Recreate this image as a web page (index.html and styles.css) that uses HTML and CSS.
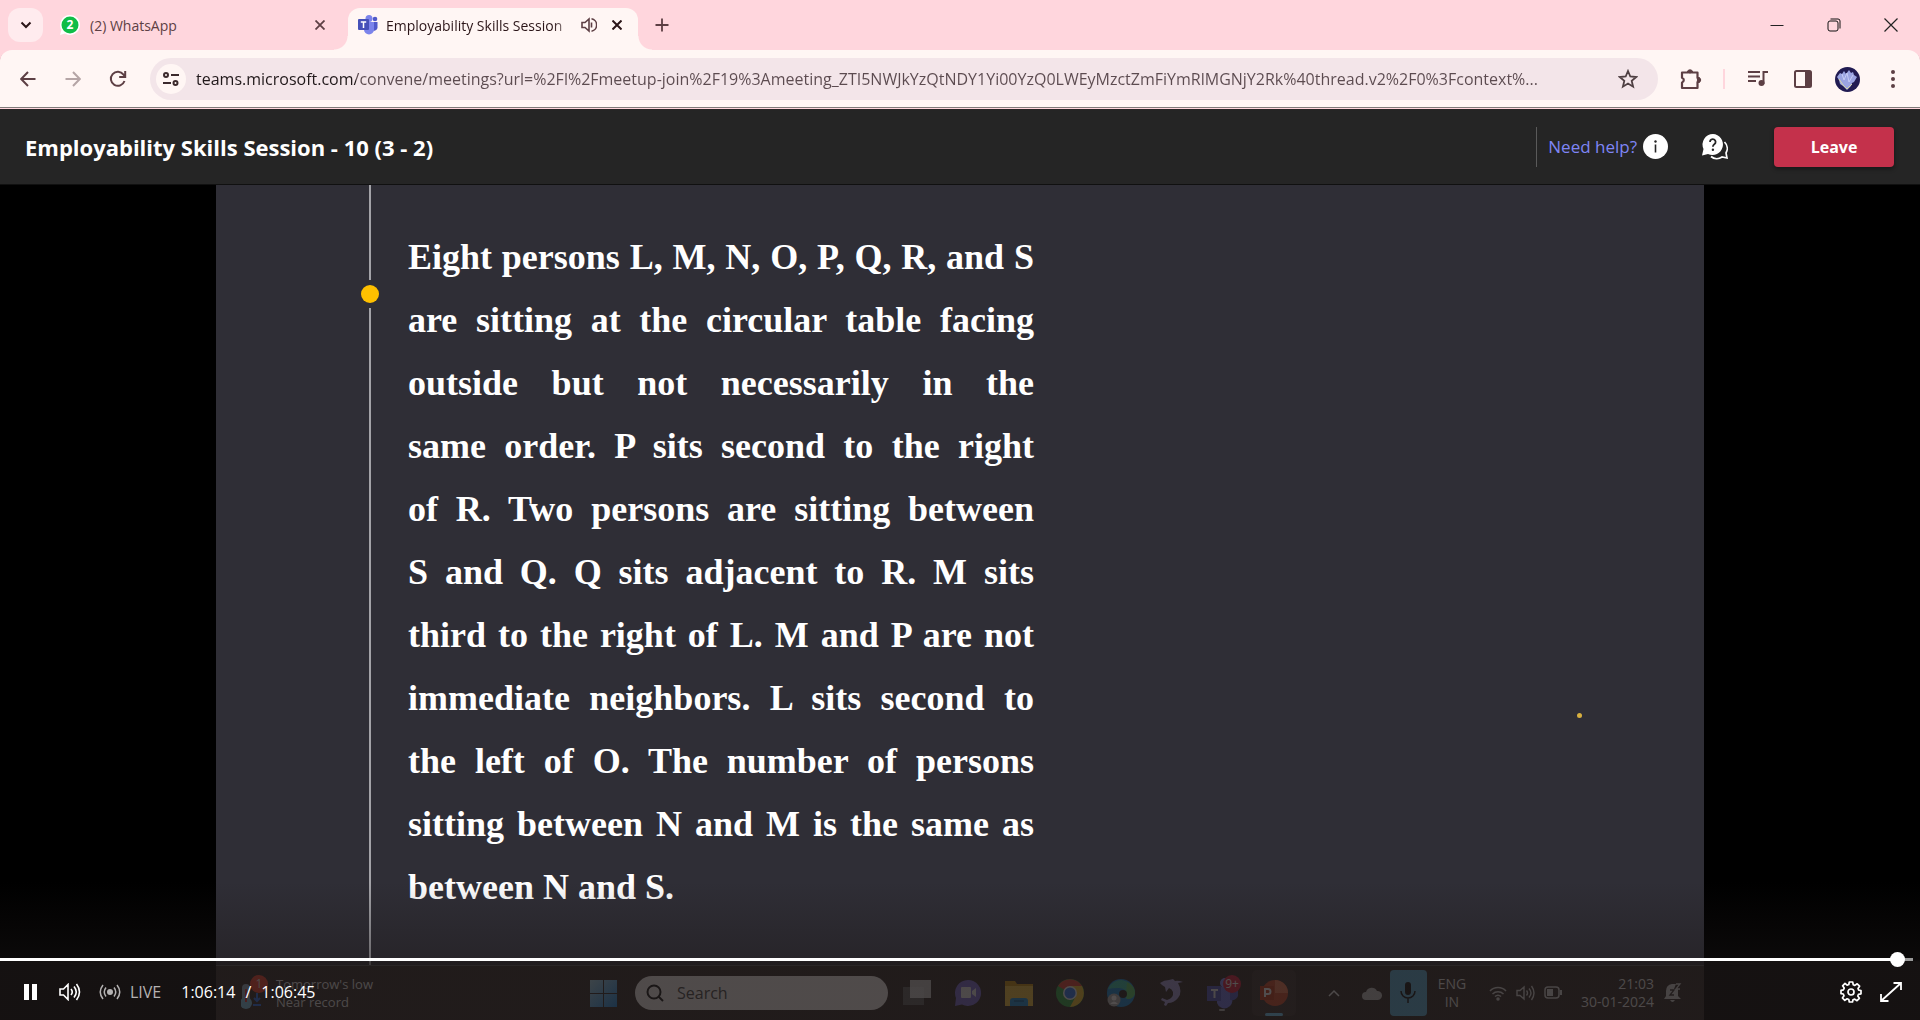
FILE: index.html
```html
<!DOCTYPE html>
<html lang="en">
<head>
<meta charset="utf-8">
<title>Employability Skills Session</title>
<link rel="stylesheet" href="styles.css">
</head>
<body>
<div class="browser">
  <div class="tabstrip">
    <button class="tab-search" aria-label="Search tabs"><svg width="12" height="12" viewBox="0 0 12 12"><path d="M1.500 3.500 6 8l4.500-4.500" fill="none" stroke="#2b1518" stroke-width="2"/></svg></button>
    <div class="tab">
      <svg width="20" height="20" viewBox="0 0 20 20"><path d="M10 0a10 10 0 1 1-5 18.600L0 20l1.400-5A10 10 0 0 1 10 0z" fill="#fff"/><circle cx="10" cy="10" r="8.500" fill="#0fbd47"/><text x="10" y="14" font-size="12" font-weight="700" text-anchor="middle" fill="#fff" font-family="Open Sans, sans-serif">2</text></svg>
      <span class="tab-title">(2) WhatsApp</span>
      <button class="tab-close" aria-label="Close WhatsApp"><svg width="10" height="10" viewBox="0 0 10 10"><path d="M.5.5l9 9M9.500.5l-9 9" stroke="#5d3f44" stroke-width="1.800"/></svg></button>
    </div>
    <div class="tab tab-active">
      <svg width="20" height="20" viewBox="0 0 20 20"><circle cx="11" cy="3.500" r="3.500" fill="#7b83eb"/><circle cx="17" cy="4" r="2.300" fill="#5059c9"/><path d="M14 7h5.500v6a3.500 3.500 0 0 1-5.500 2z" fill="#5059c9"/><path d="M6 7h10v7.500a5 5 0 0 1-10 0z" fill="#7b83eb"/><rect y="4" width="11" height="11" rx="1" fill="#4550b8"/><path d="M2.800 7h5.400M5.500 7v6" stroke="#fff" stroke-width="1.500"/></svg>
      <span class="tab-title tab-fade">Employability Skills Session</span>
      <button class="tab-close" aria-label="Mute tab"><svg width="16" height="16" viewBox="0 0 16 16" fill="none" stroke="#5d3f44" stroke-width="1.600"><path d="M1 5.500h3L8 2v12l-4-3.500H1z"/><path d="M10.500 5.500v5M10.500 1.800a6.300 6.300 0 0 1 0 12.400"/></svg></button>
      <button class="tab-close" aria-label="Close tab"><svg width="10" height="10" viewBox="0 0 10 10"><path d="M.5.5l9 9M9.500.5l-9 9" stroke="#2b1518" stroke-width="2"/></svg></button>
    </div>
    <button class="new-tab" aria-label="New tab"><svg width="14" height="14" viewBox="0 0 14 14"><path d="M7 .5v13M.5 7h13" stroke="#5d3f44" stroke-width="1.800"/></svg></button>
    <div class="window-buttons">
      <button aria-label="Minimize"><svg width="14" height="14" viewBox="0 0 14 14"><path d="M.5 7.500h13" stroke="#222"/></svg></button>
      <button aria-label="Restore"><svg width="14" height="14" viewBox="0 0 14 14" fill="none" stroke="#111"><rect x="1" y="3" width="10" height="10" rx="2"/><path d="M3.500 1H11a2 2 0 0 1 2 2v7.500"/></svg></button>
      <button aria-label="Close"><svg width="14" height="14" viewBox="0 0 14 14"><path d="M.5.5l13 13M13.500.5l-13 13" stroke="#222" stroke-width="1.200"/></svg></button>
    </div>
  </div>
  <div class="toolbar">
    <div class="nav">
      <button aria-label="Back"><svg width="16" height="16" viewBox="0 0 16 16" fill="none" stroke="#5d3f44" stroke-width="2"><path d="M15.500 8H1.500M8 1 1.200 8 8 15"/></svg></button>
      <button aria-label="Forward"><svg width="16" height="16" viewBox="0 0 16 16" fill="none" stroke="#b5a5a6" stroke-width="2"><path d="M.5 8h14M8 1l6.800 7L8 15"/></svg></button>
      <button aria-label="Reload"><svg width="18" height="18" viewBox="0 0 18 18" fill="none" stroke="#5d3f44" stroke-width="2"><path d="M15.500 11A7 7 0 1 1 14.500 4.600L16 6.500M16.200 1v6h-6"/></svg></button>
    </div>
    <div class="omnibox">
      <button class="site-info" aria-label="Site information"><svg width="16" height="14" viewBox="0 0 16 14" fill="none" stroke="#3c2a2d" stroke-width="2"><circle cx="3" cy="3" r="2"/><path d="M8 3h8M0 11h8"/><circle cx="12.500" cy="11" r="2"/></svg></button>
      <input class="url" aria-label="Address" value="teams.microsoft.com/convene/meetings?url=%2Fl%2Fmeetup-join%2F19%3Ameeting_ZTI5NWJkYzQtNDY1Yi00YzQ0LWEyMzctZmFiYmRlMGNjY2Rk%40thread.v2%2F0%3Fcontext%...">
      <button class="star" aria-label="Bookmark"><svg width="20" height="20" viewBox="0 0 20 20"><path d="M10 2l2.300 5.500 5.900.5-4.500 3.900 1.400 5.800-5.100-3.100-5.100 3.100 1.400-5.800L1.800 8l5.900-.5z" fill="none" stroke="#4f4043" stroke-width="1.800"/></svg></button>
    </div>
    <div class="tools">
      <button aria-label="Extensions"><svg width="22" height="22" viewBox="0 0 22 22"><path d="M2 4.500h6V3.500h4v1h5.500v5.500h1.500v4h-1.500V20H2v-5.500a2.500 2.500 0 0 0 0-4.800z" fill="none" stroke="#5d3f44" stroke-width="2.200" stroke-linejoin="round"/><circle cx="10" cy="3.500" r="2.200" fill="#5d3f44"/><circle cx="19" cy="12" r="2.200" fill="#5d3f44"/></svg></button>
      <span class="tools-rule"></span>
      <button aria-label="Media"><svg width="20" height="18" viewBox="0 0 20 18" fill="none" stroke="#5d3f44" stroke-width="2"><path d="M0 2h12M0 6.500h12M0 11h8M15.500 14V2H20"/><circle cx="13.500" cy="13" r="3" fill="#5d3f44" stroke="none"/></svg></button>
      <button aria-label="Side panel"><svg width="18" height="18" viewBox="0 0 18 18"><rect x="1" y="1" width="16" height="16" rx="1.500" fill="none" stroke="#5d3f44" stroke-width="2"/><path d="M11 1h6v16h-6z" fill="#5d3f44"/></svg></button>
      <button aria-label="Profile"><svg width="25" height="25" viewBox="0 0 25 25"><circle cx="12.500" cy="12.500" r="12.500" fill="#211b52"/><path d="M2 10l3-4 2 1 2-3 2 3 3-4 2 3 2-1 1 3 3 2-3 5-2 1-1 3-4 4-4-4-3-2-1-4z" fill="#9ba4e2"/><path d="M7 7l2 6 3-7 2 9 4-7" fill="none" stroke="#c6cbf5"/><path d="M4 12l4 6 4 4 5-5" fill="none" stroke="#d8d9a8"/></svg></button>
      <button aria-label="Menu"><svg width="6" height="18" viewBox="0 0 6 18" fill="#5d3f44"><circle cx="3" cy="2" r="2"/><circle cx="3" cy="9" r="2"/><circle cx="3" cy="16" r="2"/></svg></button>
    </div>
  </div>
  <header class="meeting-header">
    <h1>Employability Skills Session - 10 (3 - 2)</h1>
    <div class="help"><a href="#">Need help?</a>
      <svg width="25" height="25" viewBox="0 0 25 25"><circle cx="12.500" cy="12.500" r="12.500" fill="#fff"/><circle cx="12.500" cy="7.500" r="1.200" fill="#252525"/><path d="M12.500 10.500v8" stroke="#252525" stroke-width="1.600"/></svg></div>
    <button class="ask" aria-label="Q&amp;A"><svg width="26" height="26" viewBox="0 0 26 26"><path d="M11 0a10.500 10.500 0 1 1-5 20l-6 1.500L1.500 15A10.500 10.500 0 0 1 11 0z" fill="#fff"/><path d="M22.500 8a9 9 0 0 1 1.500 11l1 5-5-1a9 9 0 0 1-11-.5" fill="none" stroke="#fff" stroke-width="1.700"/><path d="M8 8a2.800 2.800 0 1 1 4.300 2.300c-1 .7-1.400 1.200-1.400 2.500" fill="none" stroke="#252525" stroke-width="1.800"/><circle cx="10.900" cy="15.700" r="1.200" fill="#252525"/></svg></button>
    <button class="leave">Leave</button>
  </header>
  <main class="stage">
    <section class="slide">
      <div class="slide-body">
        <div class="timeline"><i class="rail rail-top"></i><i class="dot"></i><i class="rail rail-rest"></i></div>
        <p class="question">
          <span>Eight persons L, M, N, O, P, Q, R, and S</span>
          <span>are sitting at the circular table facing</span>
          <span>outside but not necessarily in the</span>
          <span>same order. P sits second to the right</span>
          <span>of R. Two persons are sitting between</span>
          <span>S and Q. Q sits adjacent to R. M sits</span>
          <span>third to the right of L. M and P are not</span>
          <span>immediate neighbors. L sits second to</span>
          <span>the left of O. The number of persons</span>
          <span>sitting between N and M is the same as</span>
          <span>between N and S.</span>
        </p>
        <i class="pointer"></i>
      </div>
      <div class="taskbar">
        <div class="weather">
          <svg width="30" height="36" viewBox="0 0 30 36"><rect x="1" y="9" width="8" height="18" rx="4" fill="#8ba3b5"/><circle cx="5" cy="28" r="6" fill="#76b7d6"/><path d="M5 14v13" stroke="#d33" stroke-width="2"/><path d="M16 18v8m-3-3 3 3 3-3M12 30h8" stroke="#2a6be0" stroke-width="2" fill="none"/><circle cx="18" cy="9" r="9" fill="#e8402c"/><text x="18" y="13" font-size="12" text-anchor="middle" fill="#ddd" font-family="Open Sans, sans-serif">1</text></svg>
          <div class="weather-text"><span>Tomorrow's low</span><span>Near record</span></div>
        </div>
        <svg class="app" width="28" height="28" viewBox="0 0 28 28"><defs><linearGradient id="win" x2="1" y2="1"><stop stop-color="#9ec9da"/><stop offset="1" stop-color="#1b7fd0"/></linearGradient></defs><path d="M0 1h13v13H0zM14 1h13v13H14zM0 15h13v13H0zM14 15h13v13H14z" fill="url(#win)"/></svg>
        <div class="search"><svg width="18" height="18" viewBox="0 0 18 18" fill="none" stroke="#151515" stroke-width="2"><circle cx="8" cy="8" r="6.500"/><path d="M12.500 12.500 17 17"/></svg><span>Search</span></div>
        <div class="apps">
          <svg class="app" viewBox="0 0 28 28"><path d="M0 8h21v18H0z" fill="#5c5c5c"/><path d="M7 1h21v18H7z" fill="#e0e0e0" opacity=".8"/></svg>
          <svg class="app" viewBox="0 0 28 28"><path d="M14 1a13 13 0 1 1-6 24.500L1 27l1-8A13 13 0 0 1 14 1z" fill="#7466c8"/><rect x="7" y="8" width="10" height="11" rx="1" fill="#ddd"/><path d="M18 12l4-3v9l-4-3z" fill="#ddd"/></svg>
          <svg class="app" viewBox="0 0 28 28"><path d="M0 2h10l2 3h16v22H0z" fill="#c08a10"/><path d="M0 7h28v20H0z" fill="#e6b93e"/><path d="M5 27v-5q0-3 3-3h12q3 0 3 3v5z" fill="#1c87c9"/><path d="M9 22h10" stroke="#064a78"/></svg>
          <svg class="app" viewBox="0 0 28 28"><circle cx="14" cy="14" r="14" fill="#2f9e44"/><path d="M14 14 2 7a14 14 0 0 1 24 0z" fill="#d93f33"/><path d="M14 7h12a14 14 0 0 1-12 21l6-11z" fill="#e8b92d"/><circle cx="14" cy="14" r="7" fill="#e8e8e8"/><circle cx="14" cy="14" r="5.500" fill="#2f72e0"/></svg>
          <svg class="app" viewBox="0 0 28 28"><circle cx="14" cy="14" r="14" fill="#1782c8"/><path d="M1 10A14 14 0 0 1 28 14q-1 6-8 6-3-1-1-5 0-6-7-6-7 0-11 1z" fill="#35b8a0"/><path d="M20 3q8 4 8 11-1 6-8 6l-1-5z" fill="#55bd62"/><circle cx="16" cy="15" r="4" fill="#262020"/><circle cx="7" cy="21" r="6.500" fill="#aaa"/><circle cx="7" cy="19" r="2.500" fill="#eee"/><path d="M3 25q4-5 8 0z" fill="#eee"/></svg>
          <svg class="app" viewBox="0 0 28 28"><path d="M2 4Q6 1 11 1l4-1 2 2q3-1 8 1l-5 1q5 9 0 15-4 5-10 5l-2 3-2-1 1-3-4-2 1-2 5 2q7-2 6-8-1-3-4-4l-3 4-1-5-3-2z" fill="#9d95cf"/></svg>
          <svg class="app app-wide" viewBox="0 0 36 36"><circle cx="20" cy="8" r="5" fill="#7b83eb"/><path d="M12 12h15v11a7 7 0 0 1-15 5z" fill="#6a70d8"/><path d="M25 13h8v8q-2 5-8 4z" fill="#4d55b8"/><rect x="2" y="11" width="14" height="15" fill="#4c52b2"/><path d="M6 15h7M9.500 15v8" stroke="#ddd" stroke-width="2"/><circle cx="27" cy="9" r="9" fill="#d01d3c"/><text x="27" y="13" font-size="12" fill="#eee" text-anchor="middle" font-family="Open Sans, sans-serif">9+</text><rect x="14" y="34" width="6" height="2" rx="1" fill="#aaa"/></svg>
          <div class="app-current"><svg class="app" viewBox="0 0 28 28"><circle cx="15" cy="14" r="13" fill="#c8492a"/><path d="M15 14V1a13 13 0 0 1 13 13z" fill="#e27450"/><rect y="7" width="14" height="14" fill="#b83a1c"/><path d="M5 18v-8h3a2.500 2.500 0 0 1 0 5H5" fill="none" stroke="#eee" stroke-width="2"/></svg></div>
        </div>
        <div class="tray">
          <svg class="tray-more" width="12" height="8" viewBox="0 0 12 8"><path d="M1 7l5-5 5 5" fill="none" stroke="#ddd" stroke-width="1.500"/></svg>
          <svg width="20" height="14" viewBox="0 0 20 14"><path d="M4 14a4 4 0 0 1 0-8 6 6 0 0 1 11-1 4.500 4.500 0 0 1 1 9z" fill="#b5b5b5"/></svg>
          <div class="mic"><svg width="16" height="22" viewBox="0 0 16 22"><rect x="5" width="6" height="13" rx="3" fill="#111"/><path d="M1 9a7 7 0 0 0 14 0M8 16v5" fill="none" stroke="#111" stroke-width="1.500"/></svg></div>
          <div class="lang"><span>ENG</span><span>IN</span></div>
          <div class="status">
          <svg width="18" height="16" viewBox="0 0 18 16" fill="none" stroke="#ccc" stroke-width="1.500"><path d="M1 6a11 11 0 0 1 16 0M3.500 9a8 8 0 0 1 11 0M6 11.500a4.500 4.500 0 0 1 6 0"/><circle cx="9" cy="14" r="1" fill="#bbb"/></svg>
          <svg width="19" height="16" viewBox="0 0 19 16" fill="none" stroke="#ccc" stroke-width="1.400"><path d="M1 5.500h3L8 2v12l-4-3.500H1zM10.500 5.500q2 2.500 0 5M13 3.500q4 4.500 0 9M15.500 1q5 7 0 14"/></svg>
          <svg width="19" height="14" viewBox="0 0 19 14"><rect x="1" y="1" width="14" height="11" rx="3" fill="none" stroke="#ccc" stroke-width="1.500"/><path d="M3 3h6v7H3zM16 4h2v5h-2z" fill="#ccc"/></svg>
          </div>
          <div class="clock"><span>21:03</span><span>30-01-2024</span></div>
          <svg width="18" height="20" viewBox="0 0 18 20"><path d="M0 16l2-3V8q0-6 6-7h4l-2 5h4v7l3 3zM6 17h5q-2.500 4-5 0z" fill="#c5c5c5"/><path d="M6 7h4l-4 5h4" stroke="#332c2c" fill="none" stroke-width="1.300"/><path d="M12 1h4l-4 5h4" stroke="#c5c5c5" fill="none" stroke-width="1.300"/></svg>
        </div>
      </div>
    </section>
    <div class="player">
      <input class="seek" type="range" min="0" max="4005" value="3974" aria-label="Seek">
      <div class="controls">
        <button class="pause" aria-label="Pause"><svg width="14" height="16" viewBox="0 0 14 16" fill="#fff"><path d="M0 0h5v16H0zM8 0h5v16H8z"/></svg></button>
        <button class="volume" aria-label="Volume"><svg width="22" height="18" viewBox="0 0 22 18" fill="none" stroke="#fff" stroke-width="1.600"><path d="M1 6h3.500L9 1.500v15L4.500 12H1zM12 6q2.500 3 0 6M15 3.500q4.500 5.500 0 11M17.500 1q6 8 0 16"/></svg></button>
        <button class="live"><svg width="22" height="16" viewBox="0 0 22 16" fill="none" stroke="#b4b2b2" stroke-width="1.500"><circle cx="11" cy="8" r="3" fill="#b4b2b2" stroke="none"/><path d="M7 3.500q-3.500 4.500 0 9M15 3.500q3.500 4.500 0 9M4 1q-5.500 7 0 14M18 1q5.500 7 0 14"/></svg><span>LIVE</span></button>
        <div class="time"><span>1:06:14</span><span>/</span><span>1:06:45</span></div>
        <button class="settings" aria-label="Settings"><svg width="22" height="22" viewBox="0 0 22 22" fill="none" stroke="#fff" stroke-width="1.700" stroke-linejoin="round"><path d="M9.300 1h3.400l.5 2.700 1.700.7 2.300-1.600 2.400 2.400L18 7.500l.7 1.700 2.300.3v3.300l-2.500.5-.7 1.700 1.600 2.300-2.400 2.400-2.300-1.600-1.700.7-.5 2.200H9.300l-.5-2.500-1.700-.7-2.300 1.600-2.400-2.400L4 14.700 3.300 13 1 12.700V9.300l2.500-.5.700-1.700-1.600-2.300L5 2.400l2.100 1.800 1.700-.7z"/><circle cx="11" cy="11" r="3"/></svg></button>
        <button class="expand" aria-label="Full screen"><svg width="22" height="20" viewBox="0 0 22 20" fill="none" stroke="#fff" stroke-width="1.800"><path d="M1 19 21 1M13.500 1H21v7M1 12v7h7.500"/></svg></button>
      </div>
    </div>
  </main>
</div>
</body>
</html>
```
FILE: styles.css
```css
* { box-sizing: border-box; }
body { margin: 0; font-family: "Open Sans", "Noto Sans", sans-serif; background: #000; }
button { border: 0; padding: 0; background: none; font: inherit; color: inherit; display: flex; align-items: center; justify-content: center; }
svg { display: block; flex: none; }
.browser { display: flex; flex-direction: column; min-height: 100vh; background: #ffd6dd; }

.tabstrip { display: flex; align-items: center; height: 50px; padding-left: 8px; background: #ffd6dd; }
.tab-search { width: 35px; height: 34px; border-radius: 12px; background: #ffebee; }
.tab { display: flex; align-items: center; gap: 10px; width: 287px; height: 42px; margin: 8px 13px 0 5px; padding: 0 5px 8px 12px; color: #5d3f44; font-size: 14px; }
.tab-title { flex: 1; min-width: 0; white-space: nowrap; overflow: hidden; }
.tab-active { position: relative; gap: 8px; width: 290px; margin: 8px 0 0; padding: 0 11px 8px 10px; background: #fff6f4; border-radius: 12px 12px 0 0; color: #2b1518; }
.tab-active::before, .tab-active::after { content: ""; position: absolute; bottom: 0; width: 14px; height: 14px; }
.tab-active::before { left: -14px; background: radial-gradient(circle at 0 0, transparent 13px, #fff6f4 14px); }
.tab-active::after { right: -14px; background: radial-gradient(circle at 100% 0, transparent 13px, #fff6f4 14px); }
.tab-fade { mask-image: linear-gradient(90deg, #000 90%, #0004); }
.tab-close { width: 20px; height: 20px; flex: none; }
.new-tab { width: 28px; height: 28px; margin-left: 10px; }
.window-buttons { display: flex; margin-left: auto; padding-right: 1px; }
.window-buttons button { width: 57px; height: 48px; }

.toolbar { display: flex; align-items: center; height: 59px; padding: 0 15px 0 12px; background: #fff6f4; border-bottom: 1px solid #ffd6dd; border-radius: 12px 12px 0 0; box-shadow: inset 0 -1px #7f7a79; }
.nav { display: flex; gap: 13px; width: 122px; margin-right: 16px; }
.nav button { width: 32px; height: 32px; }
.omnibox { flex: 1; display: flex; align-items: center; min-width: 0; height: 42px; padding: 0 20px 0 6px; border-radius: 21px; background: #f3e5e9; }
.site-info { width: 30px; height: 30px; border-radius: 50%; background: #fff6f4; flex: none; }
.url { flex: 1; min-width: 0; margin: 0 14px 0 10px; padding: 0; border: 0; outline: 0; font: 16px/24px "Open Sans", "Noto Sans", sans-serif; color: transparent; background: linear-gradient(90deg, #20181a 160px, #5c4b50 160px); background-clip: text; -webkit-background-clip: text; }
.star { flex: none; }
.tools { display: flex; align-items: center; gap: 20px; padding-left: 20px; }
.tools button { width: 25px; height: 28px; }
.tools-rule { width: 2px; height: 20px; background: #ffd6dd; }

.meeting-header { display: flex; align-items: center; height: 76px; padding: 0 26px 0 25px; background: #252525; border-bottom: 1px solid #101010; }
.meeting-header h1 { flex: 1; margin: 0; color: #fff; font-size: 22px; line-height: 28px; font-weight: 700; }
.help { display: flex; align-items: center; gap: 6px; height: 40px; padding-left: 11px; border-left: 1px solid #5a5a5a; font-size: 17px; }
.help a { color: #7f85f5; text-decoration: none; }
.ask { margin: 0 46px 0 34px; }
.leave { width: 120px; height: 40px; border-radius: 4px; background: #c4314b; color: #fff; font-size: 16px; font-weight: 700; box-shadow: 0 2px 4px #0006; }

.stage { position: relative; flex: 1; display: flex; justify-content: center; background: #000; }
.slide { display: flex; flex-direction: column; width: 78%; max-width: 1488px; background: #2f2e36; }
.slide-body { position: relative; flex: 1; display: flex; }
.timeline { width: 18px; margin-left: 145px; display: flex; flex-direction: column; align-items: center; }
.rail { width: 2px; background: #a3a3a8; }
.rail-top { height: 95px; margin-bottom: 5px; }
.dot { width: 18px; height: 18px; border-radius: 50%; background: #ffc000; }
.rail-rest { flex: 1; margin-top: 5px; }
.question { width: 626px; margin: 41px 0 0 29px; color: #fff; font: 700 36px/63px "Liberation Serif", serif; }
.question span { display: block; white-space: nowrap; text-align-last: justify; }
.question span:last-child { text-align-last: left; }
.pointer { position: absolute; right: 122px; top: 528px; width: 5px; height: 5px; border-radius: 50%; background: #d8b040; }

.taskbar { display: flex; align-items: center; height: 55px; padding: 0 22px 0 25px; background: #2f2826; color: #ddd; font-size: 13px; line-height: 18px; border-top: 1px solid #555; }
.weather { display: flex; align-items: center; gap: 5px; width: 349px; }
.weather-text, .lang, .clock { display: flex; flex-direction: column; }
.app { width: 28px; height: 28px; }
.app-wide { width: 36px; height: 36px; margin: 0 -4px; }
.search { display: flex; align-items: center; gap: 13px; width: 253px; height: 34px; margin: 0 15px 0 17px; padding-left: 11px; border-radius: 17px; background: #e8e4e2; color: #444; font-size: 16px; }
.apps { display: flex; align-items: center; gap: 23px; }
.app-current { position: relative; display: flex; align-items: center; justify-content: center; width: 44px; height: 46px; margin: 0 -8px; border-radius: 5px; background: #3a3230; }
.app-current::after { content: ""; position: absolute; left: 13px; bottom: 0; width: 18px; height: 3px; border-radius: 2px; background: #6ac0ea; }
.tray { display: flex; align-items: center; margin-left: auto; gap: 18px; }
.tray-more { margin-right: 4px; }
.mic { display: flex; align-items: center; justify-content: center; width: 37px; height: 46px; margin: 0 -15px 0 -10px; border-radius: 4px; background: #55a6cc; }
.lang { align-items: center; width: 44px; margin-right: -3px; font-size: 14px; }
.status { display: flex; align-items: center; gap: 9px; }
.clock { align-items: flex-end; font-size: 14px; margin-right: -8px; }

.player { position: absolute; left: 0; right: 0; bottom: 0; padding-top: 70px; color: #fff; background: linear-gradient(transparent, #1c171766 77px, #1c1717bf 80px, #1c1717bf); }
.seek { display: block; appearance: none; width: 100%; height: 14px; margin: 0; background: linear-gradient(#fff, #fff) 0 center / calc(100% - 20px) 3px no-repeat, linear-gradient(#999, #999) 0 center / calc(100% - 7px) 3px no-repeat; }
.seek::-webkit-slider-thumb { appearance: none; width: 15px; height: 15px; border-radius: 50%; background: #fff; }
.controls { display: flex; align-items: center; height: 54px; padding: 0 18px 2px 24px; font-size: 16px; line-height: 24px; }
.volume { margin-left: 21px; }
.live { gap: 9px; margin: 0 20px 0 18px; color: #b4b2b2; }
.time { display: flex; gap: 10px; }
.settings { margin-left: auto; }
.expand { margin-left: 18px; }
```
